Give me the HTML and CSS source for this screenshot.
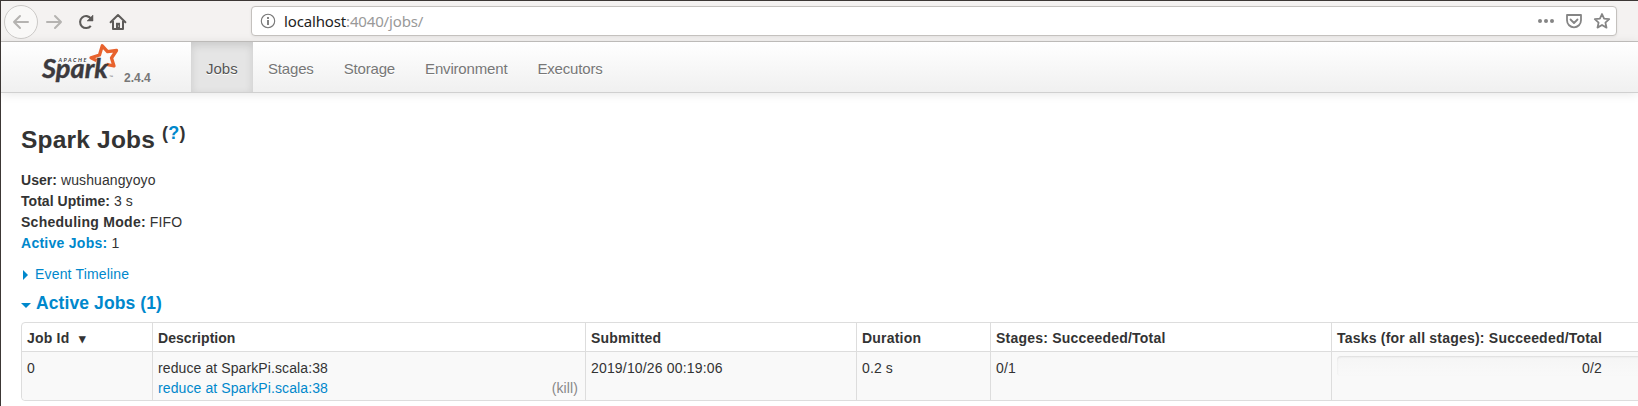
FILE: index.html
```
<!DOCTYPE html>
<html lang="en">
<head>
<meta charset="utf-8">
<title>Spark Jobs</title>
<link rel="stylesheet" href="styles.css">
</head>
<body>
<div class="window">
  <header class="toolbar">
    <div class="controls">
      <span class="back"><svg width="18" height="18" viewBox="0 0 18 18"><path d="M16 9H2M8 3L2 9l6 6" fill="none" stroke="#b5b3b1" stroke-width="2" stroke-linecap="round" stroke-linejoin="round"/></svg></span>
      <svg class="forward" width="18" height="18" viewBox="0 0 18 18"><path d="M2 9h14M10 3l6 6-6 6" fill="none" stroke="#b5b3b1" stroke-width="2" stroke-linecap="round" stroke-linejoin="round"/></svg>
      <svg class="reload" width="18" height="18" viewBox="0 0 18 18"><path d="M13.800 12.800A6 6 0 1 1 14 5.600" fill="none" stroke="#5d5b59" stroke-width="2.100"/><path d="M16 2v6h-6z" fill="#5d5b59" stroke="#5d5b59" stroke-width=".5"/></svg>
      <svg class="home" width="18" height="18" viewBox="0 0 18 18"><path d="M1.600 9.300L9 2l7.400 7.300M4 8v8h10V8" fill="none" stroke="#5d5b59" stroke-width="2" stroke-linecap="round" stroke-linejoin="round"/><path d="M7 16V9.800h4V16z" fill="#5d5b59"/><circle cx="9.500" cy="13" r=".6" fill="#f4f3f2"/></svg>
    </div>
    <div class="urlbar">
      <svg width="16" height="16" viewBox="0 0 16 16"><circle cx="8" cy="8" r="6.700" fill="none" stroke="#777" stroke-width="1.100"/><path d="M8 7v5M8 4v1.900" stroke="#777" stroke-width="1.800"/></svg>
      <span class="url">localhost<span class="path">:4040/jobs/</span></span>
      <span class="actions">
        <svg width="18" height="18" viewBox="0 0 18 18" fill="#858585"><circle cx="3" cy="9" r="2"/><circle cx="9" cy="9" r="2"/><circle cx="15" cy="9" r="2"/></svg>
        <svg width="18" height="18" viewBox="0 0 18 18" fill="none" stroke="#858585" stroke-width="1.800" stroke-linecap="round" stroke-linejoin="round"><path d="M2 3h14v5.300a7 7 0 0 1-14 0zM5.500 7.500L9 11l3.500-3.500"/></svg>
        <svg width="18" height="18" viewBox="0 0 18 18"><path d="M9 2l2.100 4.700 5.100.5-3.800 3.400 1.100 5L9 13l-4.500 2.600 1.100-5-3.800-3.400 5.100-.5z" fill="none" stroke="#858585" stroke-width="1.800" stroke-linejoin="round"/></svg>
      </span>
    </div>
  </header>

  <nav class="navbar">
    <div class="brand">
      <svg class="logo" width="74" height="42" viewBox="0 0 74 42">
        <path d="M55.500 18.500L50 15.800 58.500 13 61.300 3.800 66.500 9.700 75.500 8.500 70.500 16 73 24 65.500 22.300" fill="none" stroke="#e8622d" stroke-width="3.300" stroke-linejoin="round"/>
        <text class="logo-small" x="17.500" y="19.500" textLength="28">APACHE</text>
        <text class="logo-word" x="1" y="36" textLength="66" lengthAdjust="spacingAndGlyphs">Spark</text>
        <text class="logo-tm" x="68" y="36">™</text>
      </svg>
      <span class="version">2.4.4</span>
    </div>
    <a class="tab active">Jobs</a><a class="tab">Stages</a><a class="tab">Storage</a><a class="tab">Environment</a><a class="tab">Executors</a>
  </nav>

  <main class="content">
    <h3>Spark Jobs <sup>(<a>?</a>)</sup></h3>
    <ul class="summary">
      <li><strong class="tight">User:</strong> wushuangyoyo</li>
      <li><strong class="tight">Total Uptime:</strong> 3 s</li>
      <li><strong>Scheduling Mode:</strong> FIFO</li>
      <li><a><strong>Active Jobs:</strong></a> 1</li>
    </ul>
    <div class="timeline"><span class="arrow-right"></span><a>Event Timeline</a></div>
    <h4><span class="arrow-down"></span><a>Active Jobs (1)</a></h4>
    <table class="jobs">
      <colgroup><col class="c-id"><col class="c-desc"><col class="c-sub"><col class="c-dur"><col class="c-stages"><col class="c-tasks"></colgroup>
      <thead><tr><th>Job Id <span class="sort">▾</span></th><th class="tight">Description</th><th>Submitted</th><th>Duration</th><th>Stages: Succeeded/Total</th><th>Tasks (for all stages): Succeeded/Total</th></tr></thead>
      <tbody><tr>
        <td>0</td>
        <td><div>reduce at SparkPi.scala:38</div><div class="detail"><a>reduce at SparkPi.scala:38</a><span class="kill">(kill)</span></div></td>
        <td class="submitted">2019/10/26 00:19:06</td>
        <td>0.2 s</td>
        <td>0/1</td>
        <td class="task-cell"><div class="progress">0/2</div></td>
      </tr></tbody>
    </table>
  </main>
</div>
</body>
</html>
```
FILE: styles.css
```
* { box-sizing: border-box; }
body { margin: 0; background: #fff; color: #333; font: 14px/21px "Liberation Sans", Arial, sans-serif; letter-spacing: .1px; overflow: hidden; }
a { color: #0088cc; text-decoration: none; }
svg { display: block; flex: none; }
.window { height: 406px; border-top: 1px solid #3c3735; border-left: 1px solid #3c3735; overflow: hidden; }

.toolbar { display: flex; height: 41px; background: #f4f2f1; border-bottom: 1px solid #c4c2c0; padding: 5px 21px 0 3px; }
.controls { display: flex; align-items: center; width: 247px; height: 31px; }
.back { display: flex; align-items: center; justify-content: center; width: 34px; height: 34px; border: 1px solid #cbc9c7; border-radius: 50%; background: #f9f8f7; }
.forward { margin-left: 7px; }
.reload { margin-left: 14px; }
.home { margin-left: 14px; }
.urlbar { display: flex; align-items: center; flex: 1; height: 30px; border: 1px solid #c4c1be; border-radius: 4px; background: #fff; padding: 0 5px 0 8px; box-shadow: 0 1px 3px rgba(0,0,0,.07); }
.url { margin-left: 8px; font: 15px/20px "Noto Sans", sans-serif; letter-spacing: -.15px; color: #222; }
.path { color: #999; }
.actions { display: flex; gap: 10px; margin-left: auto; }

.navbar { display: flex; height: 51px; background: linear-gradient(#fff, #f0f0f0); border-bottom: 1px solid #d0d0d0; box-shadow: 0 1px 10px rgba(0,0,0,.1); }
.brand { display: flex; width: 190px; padding-left: 40px; letter-spacing: 0; }
.logo { overflow: visible; }
.logo-small { font: italic bold 5.500px Lato, sans-serif; fill: #3c3a3e; }
.logo-word { font: italic 700 26px Lato, sans-serif; fill: #3c3a3e; stroke: #3c3a3e; stroke-width: .4px; }
.logo-tm { font: 4px "Liberation Sans", sans-serif; fill: #666; }
.version { margin: 26px 0 0 9px; font-size: 12px; font-weight: bold; line-height: 20px; color: #777; }
.tab { padding: 17px 15px 0; font-size: 15px; line-height: 20px; letter-spacing: -.17px; color: #777; text-shadow: 0 1px 0 #fff; }
.tab.active { width: 62px; letter-spacing: 0; color: #555; background: #e5e5e5; box-shadow: inset 0 3px 8px rgba(0,0,0,.125); }

.content { padding: 27px 0 0 20px; }
h3 { margin: 0; font-size: 24.500px; line-height: 40px; letter-spacing: .2px; }
sup { position: relative; top: -9px; font-size: 18px; line-height: 0; vertical-align: baseline; }
strong { letter-spacing: .27px; }
.summary { list-style: none; margin: 10px 0 0; padding: 0; }
.timeline { display: flex; align-items: center; margin-top: 10px; letter-spacing: .17px; }
.arrow-right { border: 5px solid transparent; border-left-color: #0088cc; border-right: 0; margin: 0 7px 0 2px; }
h4 { display: flex; align-items: center; margin: 8px 0 0; font-size: 17.500px; line-height: 21px; }
.arrow-down { border: 5px solid transparent; border-top-color: #0088cc; border-bottom: 0; margin: 3px 5px 0 0; }
.jobs { width: 1832px; margin-top: 8px; table-layout: fixed; border-collapse: separate; border-spacing: 0; border: 1px solid #ddd; border-radius: 4px; }
.c-id { width: 130px; }
.c-desc { width: 433px; }
.c-sub { width: 271px; }
.c-dur { width: 134px; }
.c-stages { width: 341px; }
th, td { padding: 5px; text-align: left; vertical-align: top; line-height: 20px; white-space: nowrap; }
th { height: 28px; padding: 5px 5px 3px; letter-spacing: .21px; }
td { height: 49px; padding: 6px 5px 2px; background: #f9f9f9; border-top: 1px solid #ddd; }
th + th, td + td { border-left: 1px solid #ddd; }
td:first-child { border-bottom-left-radius: 4px; }
.tight { letter-spacing: .04px; }
.submitted { letter-spacing: .17px; }
.sort { margin-left: 5px; font-size: 13px; line-height: 1; }
.detail { display: flex; justify-content: space-between; padding-right: 2px; }
.kill { color: #888; }
td.task-cell { padding-top: 4px; }
.progress { height: 20px; padding-top: 2px; border-radius: 4px; text-align: center; background: linear-gradient(#f5f5f5, #f9f9f9); box-shadow: inset 0 1px 2px rgba(0,0,0,.1); }
```
